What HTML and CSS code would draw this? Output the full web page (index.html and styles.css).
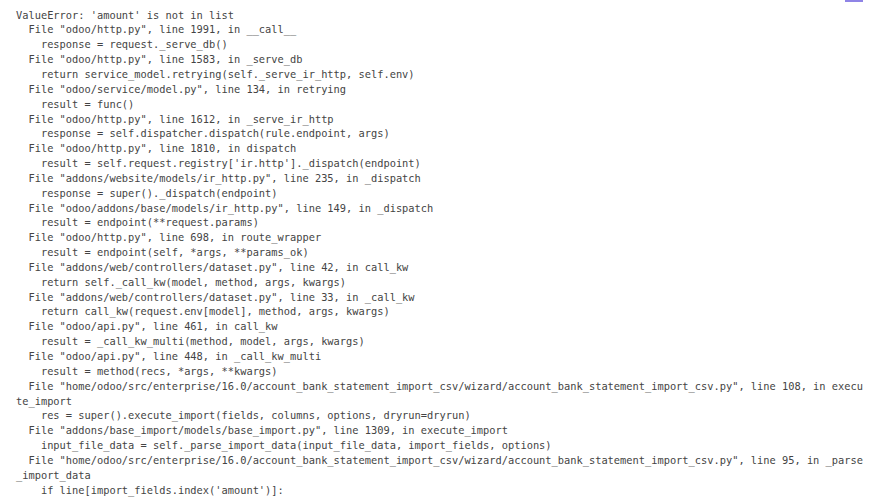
FILE: index.html
```html
<!DOCTYPE html>
<html>
<head>
<meta charset="utf-8">
<link rel="stylesheet" href="styles.css">
</head>
<body>
<div class="page">
<span class="tab-indicator"></span>
<pre class="traceback">ValueError: 'amount' is not in list
  File "odoo/http.py", line 1991, in __call__
    response = request._serve_db()
  File "odoo/http.py", line 1583, in _serve_db
    return service_model.retrying(self._serve_ir_http, self.env)
  File "odoo/service/model.py", line 134, in retrying
    result = func()
  File "odoo/http.py", line 1612, in _serve_ir_http
    response = self.dispatcher.dispatch(rule.endpoint, args)
  File "odoo/http.py", line 1810, in dispatch
    result = self.request.registry['ir.http']._dispatch(endpoint)
  File "addons/website/models/ir_http.py", line 235, in _dispatch
    response = super()._dispatch(endpoint)
  File "odoo/addons/base/models/ir_http.py", line 149, in _dispatch
    result = endpoint(**request.params)
  File "odoo/http.py", line 698, in route_wrapper
    result = endpoint(self, *args, **params_ok)
  File "addons/web/controllers/dataset.py", line 42, in call_kw
    return self._call_kw(model, method, args, kwargs)
  File "addons/web/controllers/dataset.py", line 33, in _call_kw
    return call_kw(request.env[model], method, args, kwargs)
  File "odoo/api.py", line 461, in call_kw
    result = _call_kw_multi(method, model, args, kwargs)
  File "odoo/api.py", line 448, in _call_kw_multi
    result = method(recs, *args, **kwargs)
  File "home/odoo/src/enterprise/16.0/account_bank_statement_import_csv/wizard/account_bank_statement_import_csv.py", line 108, in execu
te_import
    res = super().execute_import(fields, columns, options, dryrun=dryrun)
  File "addons/base_import/models/base_import.py", line 1309, in execute_import
    input_file_data = self._parse_import_data(input_file_data, import_fields, options)
  File "home/odoo/src/enterprise/16.0/account_bank_statement_import_csv/wizard/account_bank_statement_import_csv.py", line 95, in _parse
_import_data
    if line[import_fields.index('amount')]:</pre>
</div>
</body>
</html>
```
FILE: styles.css
```css
html, body {
  margin: 0;
  padding: 0;
  background: #ffffff;
}
.page {
  position: relative;
  width: 885px;
  height: 503px;
  overflow: hidden;
}
.tab-indicator {
  position: absolute;
  top: 0;
  left: 845px;
  width: 18px;
  height: 2px;
  background: #8f84e6;
}
.traceback {
  margin: 0;
  padding: 7.6px 0 0 16px;
  font-family: "DejaVu Sans Mono", monospace;
  font-size: 10.35px;
  line-height: 14.84px;
  color: #444444;
  white-space: pre;
}
```
